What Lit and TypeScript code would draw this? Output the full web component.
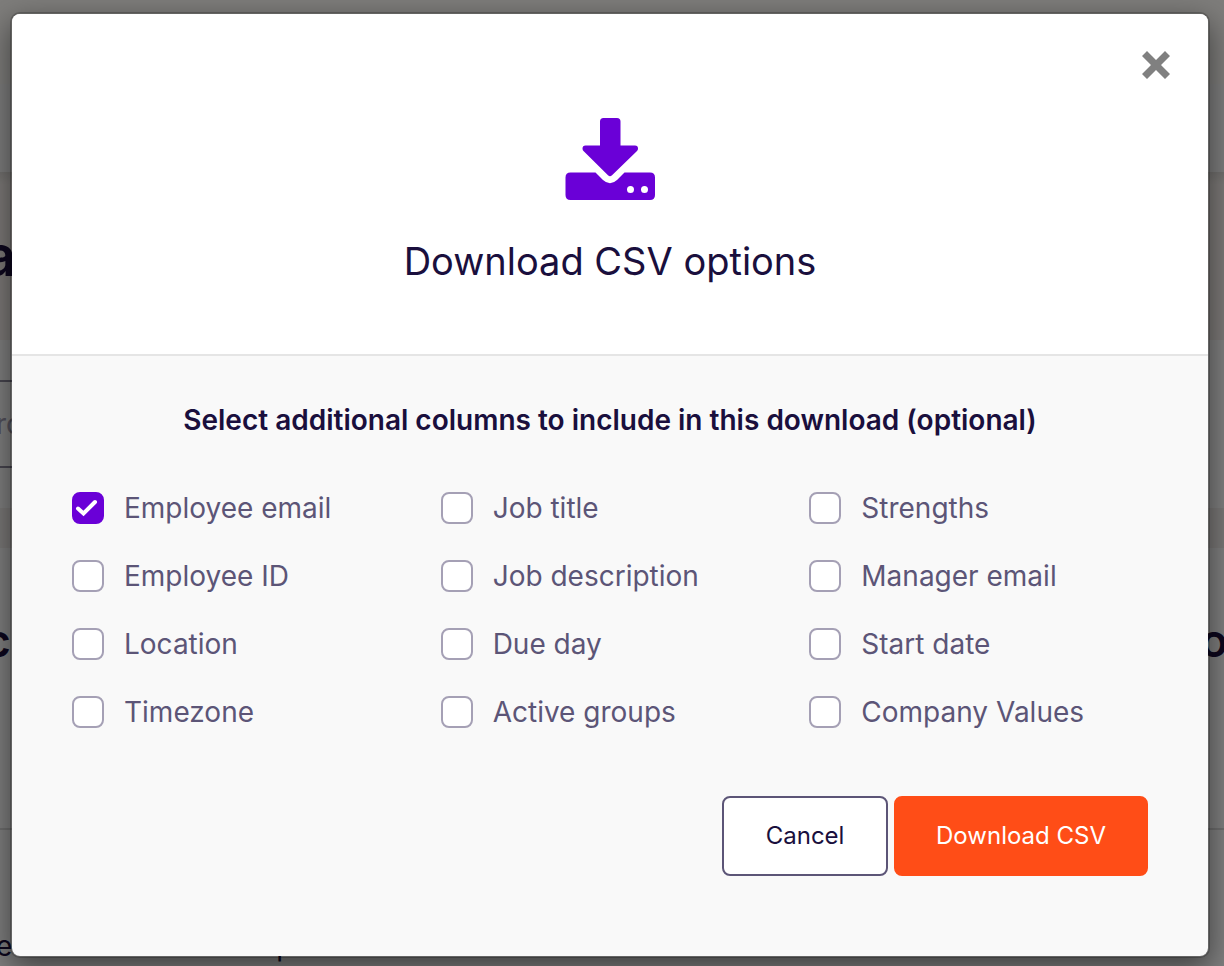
import { LitElement, html, css, svg } from "lit";
import { customElement, property, state } from "lit/decorators.js";

interface ColumnOption {
  id: string;
  label: string;
  checked: boolean;
}

const OPTIONS: ColumnOption[] = [
  { id: "email", label: "Employee email", checked: true },
  { id: "employee-id", label: "Employee ID", checked: false },
  { id: "location", label: "Location", checked: false },
  { id: "timezone", label: "Timezone", checked: false },
  { id: "job-title", label: "Job title", checked: false },
  { id: "job-description", label: "Job description", checked: false },
  { id: "due-day", label: "Due day", checked: false },
  { id: "groups", label: "Active groups", checked: false },
  { id: "strengths", label: "Strengths", checked: false },
  { id: "manager-email", label: "Manager email", checked: false },
  { id: "start-date", label: "Start date", checked: false },
  { id: "values", label: "Company Values", checked: false },
];

const tick = svg`<path d="M6 16.500 L11.500 21.500 L23 10" fill="none" stroke="#fff" stroke-width="4" stroke-linecap="round" stroke-linejoin="miter"/>`;

@customElement("column-checkbox")
export class ColumnCheckbox extends LitElement {
  @property() label = "";
  @property({ type: Boolean }) checked = false;

  static styles = css`
    :host {
      display: block;
    }
    .option {
      display: flex;
      align-items: center;
      gap: 20px;
      line-height: 32px;
      cursor: pointer;
    }
    .box {
      display: grid;
      flex: none;
    }
    .box > * {
      grid-area: 1 / 1;
    }
    .input {
      appearance: none;
      box-sizing: border-box;
      width: 32px;
      height: 32px;
      margin: 0;
      border: 2px solid #a5a0b5;
      border-radius: 8px;
      background: #fff;
    }
    .input:checked {
      border-color: #6a00d7;
      background: #6a00d7;
    }
    .tick {
      width: 32px;
      height: 32px;
      pointer-events: none;
    }
  `;

  private onChange(e: Event) {
    this.checked = (e.target as HTMLInputElement).checked;
  }

  render() {
    return html`<label class="option">
      <span class="box">
        <input class="input" type="checkbox" .checked=${this.checked} @change=${this.onChange} />
        ${this.checked
          ? html`<svg class="tick" viewBox="0 0 32 32" aria-hidden="true">${tick}</svg>`
          : ""}
      </span>
      <span>${this.label}</span>
    </label>`;
  }
}

@customElement("page-behind")
export class PageBehind extends LitElement {
  static styles = css`
    :host {
      display: block;
      overflow: hidden;
      color: #1a0f3d;
      background: #fff;
    }
    .strip {
      height: 84px;
      background: #fcfaf6;
    }
    .nav {
      height: 88px;
      background: #fafafa;
    }
    .hero {
      box-sizing: border-box;
      height: 168px;
      padding-top: 52px;
      background: linear-gradient(#e4e1dd, #f8f2ee 12px);
      font-size: 56px;
      line-height: 64px;
      font-weight: 600;
    }
    .cut {
      display: block;
      margin-left: -16px;
    }
    .search {
      margin: 40px 40px 0 0;
      border: solid #8e8a9e;
      border-width: 2px 0;
      color: #a5a0b5;
      font-size: 28px;
      line-height: 84px;
    }
    .banner {
      height: 40px;
      margin-top: 40px;
      background: #f4f0ee;
    }
    .title {
      display: flex;
      justify-content: space-between;
      height: 240px;
      padding-top: 40px;
      border-bottom: 2px solid #dcdcdc;
      font-size: 46px;
      line-height: 104px;
      font-weight: 600;
    }
    .end {
      margin-right: -4px;
    }
    .row {
      display: flex;
      gap: 264px;
      height: 36px;
      padding-top: 100px;
      font-size: 28px;
      line-height: 32px;
    }
    .letter {
      margin-left: -4px;
    }
  `;

  render() {
    return html`
      <div class="strip"></div>
      <div class="nav"></div>
      <div class="hero"><span class="cut">a</span></div>
      <div class="search"><span class="letter">ro</span></div>
      <div class="banner"></div>
      <div class="title"><span class="cut">c</span><span class="end">o</span></div>
      <div class="row"><span class="letter">e</span><span>p</span></div>
    `;
  }
}

@customElement("app-root")
export class AppRoot extends LitElement {
  @state() private open = true;

  static styles = css`
    :host {
      display: grid;
      height: 100vh;
      overflow: hidden;
      font-family: Inter, "Liberation Sans", sans-serif;
      color: #1a0f3d;
    }
    .page,
    .backdrop {
      grid-area: 1 / 1;
      min-width: 0;
      min-height: 0;
    }
    .backdrop {
      z-index: 1;
      overflow: hidden;
      padding: 12px 14px 8px 10px;
      background: rgba(0, 0, 0, 0.5);
    }
    .dialog {
      border: 2px solid rgba(0, 0, 0, 0.2);
      border-radius: 10px;
      background: #f9f9f9;
      background-clip: padding-box;
      box-shadow: 0 10px 30px rgba(0, 0, 0, 0.5);
    }
    .header {
      display: grid;
      justify-items: center;
      padding: 31px 32px 67px;
      border-bottom: 2px solid #e5e5e5;
      border-radius: 8px 8px 0 0;
      background: #fff;
    }
    .close {
      display: grid;
      place-items: center;
      justify-self: end;
      width: 40px;
      height: 40px;
      padding: 0;
      border: 0;
      background: none;
      color: #808080;
      cursor: pointer;
    }
    .close-icon {
      width: 28px;
      height: 28px;
    }
    .download-icon {
      width: 90px;
      height: 84px;
      margin-top: 32px;
      color: #6a00d7;
    }
    .heading {
      margin: 34px 0 0;
      font-size: 38px;
      line-height: 52px;
      font-weight: 400;
    }
    .body {
      padding: 44px 60px 80px;
    }
    .fields {
      margin: 0;
      padding: 0;
      border: 0;
    }
    .legend {
      width: 100%;
      padding: 0;
      text-align: center;
      font-size: 28px;
      line-height: 40px;
      font-weight: 600;
    }
    .options {
      display: grid;
      grid-template-columns: repeat(3, 1fr);
      grid-template-rows: repeat(4, auto);
      grid-auto-flow: column;
      gap: 36px 30px;
      margin-top: 52px;
      color: #5c5577;
      font-size: 28px;
    }
    .actions {
      display: flex;
      justify-content: flex-end;
      gap: 6px;
      margin-top: 68px;
    }
    .button {
      min-width: 166px;
      padding: 22px 40px;
      border: 2px solid #5c5577;
      border-radius: 8px;
      background: #fff;
      color: #1a0f3d;
      font: inherit;
      font-size: 24px;
      line-height: 32px;
      cursor: pointer;
    }
    .primary {
      border-color: #ff4d17;
      background: #ff4d17;
      color: #fff;
    }
  `;

  private close() {
    this.open = false;
  }

  render() {
    return html`
      <page-behind class="page" aria-hidden="true"></page-behind>
      ${this.open ? this.renderDialog() : ""}
    `;
  }

  private renderDialog() {
    return html`<div class="backdrop">
      <section class="dialog" role="dialog" aria-modal="true" aria-labelledby="heading">
        <header class="header">
          <button class="close" type="button" aria-label="Close" @click=${this.close}>
            <svg class="close-icon" viewBox="0 0 28 28" aria-hidden="true">
              <path fill="currentColor" d="M5 0 L14 9 L23 0 L28 5 L19 14 L28 23 L23 28 L14 19 L5 28 L0 23 L9 14 L0 5 Z" />
            </svg>
          </button>
          <svg class="download-icon" viewBox="0 0 90 84" aria-hidden="true">
            <path
              fill="currentColor"
              d="M38.500 1 H52 Q55.500 1 55.500 4.500 V28.500 H70 Q73 28.500 73 31.500 Q73 33 72 34 L47 58.300 Q45 60 43 58.300 L18.500 34 Q17.500 33 17.500 31.500 Q17.500 28.500 20.500 28.500 H35 V4.500 Q35 1 38.500 1 Z"
            />
            <path
              fill="currentColor"
              fill-rule="evenodd"
              d="M5.500 55.500 H30.500 L38 63 Q45 69.500 52 63 L59.500 55.500 H85 Q90 55.500 90 60.500 V78 Q90 83 85 83 H5.500 Q0.500 83 0.500 78 V60.500 Q0.500 55.500 5.500 55.500 Z M62 72.500 a3.500 3.500 0 1 0 7 0 a3.500 3.500 0 1 0 -7 0 Z M76 72.500 a3.500 3.500 0 1 0 7 0 a3.500 3.500 0 1 0 -7 0 Z"
            />
          </svg>
          <h1 class="heading" id="heading">Download CSV options</h1>
        </header>
        <div class="body">
          <fieldset class="fields">
            <legend class="legend">Select additional columns to include in this download (optional)</legend>
            <div class="options">
              ${OPTIONS.map(
                (o) => html`<column-checkbox .label=${o.label} .checked=${o.checked}></column-checkbox>`
              )}
            </div>
          </fieldset>
          <div class="actions">
            <button class="button" type="button" @click=${this.close}>Cancel</button>
            <button class="button primary" type="button">Download CSV</button>
          </div>
        </div>
      </section>
    </div>`;
  }
}
